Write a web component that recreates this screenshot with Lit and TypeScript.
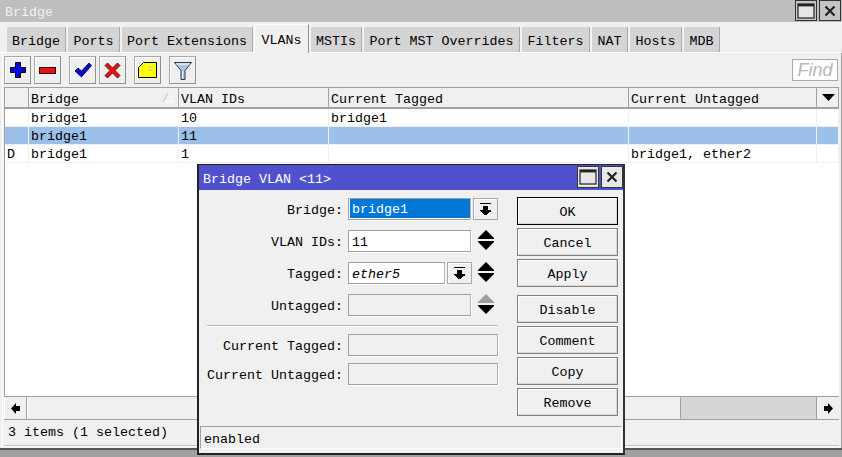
import { LitElement, html, css } from "lit";
import { customElement } from "lit/decorators.js";

const TABS: [string, number, boolean?][] = [
  ["Bridge", 60], ["Ports", 53], ["Port Extensions", 132], ["VLANs", 55, true], ["MSTIs", 52],
  ["Port MST Overrides", 157], ["Filters", 69], ["NAT", 37], ["Hosts", 53], ["MDB", 37],
];

const ddIcon = html`<svg width="13" height="13" viewBox="0 0 13 13" shape-rendering="crispEdges"><path d="M1 0h11v1H1zM4 3h5v4h3v1l-1 1h-1v1H9v1H8v1H5v-1H4v-1H3V9H2L1 8V7h3z" fill="#000"/></svg>`;
const spin = (dim = false, cls = "") => html`<svg class="spin ${cls}" width="16" height="20" viewBox="0 0 16 20">
  <polygon points="8,0 16,8 16,9 0,9 0,8" fill=${dim ? "#9aa09a" : "#000"}/>
  <polygon points="0,11 16,11 16,12 8,20 0,12" fill="#000"/></svg>`;

const winBtns = (light: boolean) => html`
  <span class="wb ${light ? "lt" : ""}"><svg width="18" height="16" viewBox="0 0 18 16"><rect x="1" y="1" width="16" height="14" fill="#e8e4e4" stroke="#222" stroke-width="1.2"/><rect x="1" y="1" width="16" height="2.4" fill="#222"/></svg></span>
  <span class="wb ${light ? "lt" : ""}"><svg width="12" height="12" viewBox="0 0 12 12"><path d="M1.5 1.5l9 9M10.500 1.500l-9 9" stroke="#222" stroke-width="2.2"/></svg></span>`;

@customElement("app-root")
export class AppRoot extends LitElement {
  static styles = css`
    :host { display: block; width: 842px; height: 457px; position: relative; overflow: hidden; background: #a0a0a0;
      font: 13.33px/16px "Liberation Mono", monospace; color: #000; }
    .win { height: 450px; background: #f0f0f0; display: flex; flex-direction: column; border-bottom: 2px solid #555; box-sizing: border-box; }
    .tbar { height: 22px; flex: none; background: #bebebe; color: #f2f2f2; display: flex; align-items: center; padding-left: 5px; }
    .tbar .t { flex: 1; padding-top: 4px; }
    .tbar .btns { display: flex; gap: 2px; margin: 0 1px 2px 0; align-self: flex-start; }
    .wb { width: 20px; height: 19px; border: 1px solid #333; background: #c4c4c4; display: flex; align-items: center; justify-content: center; }
    .wb.lt { background: #e8e8e8; }
    .tabs { height: 30px; flex: none; display: flex; align-items: flex-end; gap: 1px; padding-left: 6px; border-bottom: 1px solid #fff; }
    .tab { height: 25px; box-sizing: border-box; background: #d4d4d4; border-right: 1px solid #a8a8a8; border-left: 1px solid #f4f4f4; display: flex; align-items: center; justify-content: center; padding-top: 5px; }
    .tab.on { background: #f0f0f0; border-top: 1px solid #fff; border-left: 1px solid #fff; border-right: 1px solid #909090; padding-top: 3px; margin-bottom: -1px; height: 29px; }
    .panel { flex: 1; display: flex; flex-direction: column; margin-left: 2px; border-left: 1px solid #fff; padding: 0 2px 2px 1px; min-height: 0; border-right: 1px solid #a0a0a0; }
    .tools { height: 34px; flex: none; display: flex; align-items: flex-start; padding-top: 3px; box-sizing: border-box; }
    .tb { width: 27px; height: 28px; box-sizing: border-box; border: 1px solid #a8a8a8; border-bottom-color: #909090; border-right-color: #909090; background: #efefef; box-shadow: inset 1px 1px 0 #fff; display: flex; align-items: center; justify-content: center; margin-right: 3px; }
    .tb.sep { margin-right: 8px; }
    .find { margin-left: auto; margin-top: 3px; margin-right: 1px; width: 46px; height: 22px; box-sizing: border-box; border: 1px solid #a8a8a8; background: #fff; font: italic 18px/20px "Liberation Sans", sans-serif; color: #b4b8bc; text-align: center; }
    .table { flex: 1; min-height: 0; background: #fff; border: 1px solid #a0a0a0; border-right: none; display: flex; flex-direction: column; }
    .row { display: grid; grid-template-columns: 24px 150px 150px 300px 188px 22px; height: 18px; box-sizing: border-box; border-bottom: 1px solid #efefef; }
    .row > div { padding-left: 2px; white-space: pre; overflow: hidden; border-right: 1px solid #efefef; box-sizing: border-box; line-height: 19px; }
    .row.head { height: 21px; background: #f0f0f0; border-bottom: 2px solid #a0a0a0; }
    .row.head > div { border-right: 1px solid #a0a0a0; line-height: 24px; position: relative; }
    .row.sel { background: #9dc0e9; }
    .row.sel > div { border-right-color: #f0f0f0; }
    .sort { position: absolute; right: 4px; top: 4px; }
    .caret { display: flex; align-items: center; justify-content: center; }
    .sb { height: 23px; flex: none; display: flex; border-bottom: 1px solid #a0a0a0; box-sizing: border-box; background: #d6d6d6; }
    .sb .ab { width: 23px; background: #f0f0f0; border-left: 1px solid #fff; border-right: 1px solid #a0a0a0; display: flex; align-items: center; justify-content: center; box-sizing: border-box; }
    .sb .ab.r { border-left: 1px solid #a0a0a0; border-right: none; margin-left: auto; }
    .sb .th { width: 654px; background: #f0f0f0; border-left: 1px solid #fff; border-right: 1px solid #a0a0a0; box-sizing: border-box; }
    .status { height: 25px; flex: none; display: flex; align-items: center; padding-left: 4px; border-bottom: 1px solid #c0c0c0; box-shadow: 0 1px 0 #fff; }
    .dlg { position: absolute; left: 197px; top: 164px; width: 428px; height: 291px; box-sizing: border-box; background: #f0f0f0; border: 2px solid #222; border-top-width: 1px; border-right-color: #333; display: flex; flex-direction: column; }
    .dt { height: 25px; flex: none; background: #4f52cc; color: #fff; display: flex; align-items: center; padding-left: 4px; }
    .dt .t { flex: 1; padding-top: 5px; }
    .dt .btns { display: flex; gap: 2px; align-self: flex-end; margin-bottom: 2px; }
    .dt .wb { height: 20px; }
    .dbody { display: flex; padding-top: 7px; }
    .form { width: 299px; padding-top: 1px; display: flex; flex-direction: column; gap: 10px; }
    .fr { display: flex; height: 22px; align-items: center; }
    .lab { width: 144px; text-align: right; flex: none; margin-right: 5px; padding-top: 4px; box-sizing: border-box; }
    .inp { width: 123px; height: 22px; box-sizing: border-box; border: 1px solid #a0a0a0; border-right-color: #b4b4b4; background: #fff; padding: 4px 0 0 3px; line-height: 16px; box-shadow: 1px 1px 0 #fff; }
    .inp.short { width: 97px; font-style: italic; }
    .inp.full { width: 150px; }
    .inp.ro { background: #f0f0f0; }
    .inp.pick { padding: 0 0 0 1px; }
    .hl { background: #0078d7; color: #fff; height: 19px; display: block; padding: 3px 0 0 2px; box-sizing: border-box; }
    .dd { width: 25px; height: 22px; box-sizing: border-box; border: 1px solid #a8a8a8; background: #efefef; display: flex; align-items: center; justify-content: center; margin-left: 2px; box-shadow: inset 1px 1px 0 #fff; }
    .spin { margin: -3px 0 0 7px; }
    .spin.near { margin-left: 6px; }
    .hr { height: 1px; background: #b8b8b8; box-shadow: 0 1px 0 #fff; margin: -1px 0 -2px 8px; width: 291px; }
    .rows2 { display: flex; flex-direction: column; gap: 7px; }
    .btns2 { margin-left: 19px; width: 101px; display: flex; flex-direction: column; gap: 3px; }
    .b { height: 28px; box-sizing: border-box; border: 1px solid #808080; padding-top: 4px; box-shadow: inset -1px -1px 0 #d8d8d8, inset 1px 1px 0 #fff; display: flex; align-items: center; justify-content: center; background: #f0f0f0; }
    .b.def { border-color: #000; }
    .b.gap { margin-top: 5px; }
    .dst { margin: auto 1px 4px 1px; height: 23px; box-sizing: border-box; border: 1px solid #a0a0a0; border-right-color: #fff; border-bottom-color: #fff; padding: 4px 0 0 3px; display: flex; align-items: center; }
    svg { display: block; }
  `;

  render() {
    const rows = [
      ["", "bridge1", "10", "bridge1", "", ""],
      ["", "bridge1", "11", "", "", ""],
      ["D", "bridge1", "1", "", "bridge1, ether2", ""],
    ];
    return html`
      <div class="win">
        <div class="tbar"><span class="t">Bridge</span><span class="btns">${winBtns(false)}</span></div>
        <div class="tabs">
          ${TABS.map(([n, w, on]) => html`<div class="tab ${on ? "on" : ""}" style="width:${w}px">${n}</div>`)}
        </div>
        <div class="panel">
          <div class="tools">
            <div class="tb"><svg width="16" height="16" viewBox="0 0 16 16"><path d="M5.500.5h5v5h5v5h-5v5h-5v-5h-5v-5h5z" fill="#0a0ae0" stroke="#000"/></svg></div>
            <div class="tb sep"><svg width="17" height="7" viewBox="0 0 17 7"><rect x=".5" y=".5" width="16" height="6" fill="#e81010" stroke="#300"/></svg></div>
            <div class="tb"><svg width="18" height="16" viewBox="0 0 18 16"><path d="M1 9l3-3 3.500 3L15 1l2.500 2.500L7.500 15z" fill="#0a0ae0" stroke="#000" stroke-width=".8"/></svg></div>
            <div class="tb sep"><svg width="17" height="17" viewBox="0 0 17 17"><path d="M1 3.500L3.500 1l5 5 5-5L16 3.500l-5 5 5 5-2.500 2.500-5-5-5 5L1 13.500l5-5z" fill="#f01010" stroke="#300" stroke-width=".8"/></svg></div>
            <div class="tb sep"><svg width="19" height="16" viewBox="0 0 19 16"><path d="M.5 5.500L5.500.5h13v15H.5z" fill="#ffff00" stroke="#000"/><path d="M10 5h6M10 8h6" stroke="#c8c8a0"/></svg></div>
            <div class="tb"><svg width="18" height="19" viewBox="0 0 18 19"><path d="M.5 1.500h17L11 9.500v9H7v-9z" fill="#a9c8e8" stroke="#303840"/><path d="M2.500 3h13" stroke="#e8f0f8" stroke-width="1.500"/><path d="M8.500 10v8" stroke="#e8f0f8"/></svg></div>
            <div class="find">Find</div>
          </div>
          <div class="table">
            <div class="row head">
              <div></div>
              <div>Bridge<svg class="sort" width="12" height="11" viewBox="0 0 12 11"><path d="M6 1L1 10h10z" fill="none" stroke="#fff"/><path d="M6 1L1 10" stroke="#bdbdbd" fill="none"/></svg></div>
              <div>VLAN IDs</div><div>Current Tagged</div><div>Current Untagged</div>
              <div class="caret"><svg width="13" height="7" viewBox="0 0 13 7"><path d="M0 0h13L6.500 7z" fill="#000"/></svg></div>
            </div>
            ${rows.map((r, i) => html`<div class="row ${i === 1 ? "sel" : ""}">${r.map((c) => html`<div>${c}</div>`)}</div>`)}
          </div>
          <div class="sb">
            <div class="ab"><svg width="9" height="11" viewBox="0 0 9 11"><path d="M5 0v3h4v5H5v3L0 5.500z" fill="#000"/></svg></div>
            <div class="th"></div>
            <div class="ab r"><svg width="9" height="11" viewBox="0 0 9 11"><path d="M4 0v3H0v5h4v3l5-5.500z" fill="#000"/></svg></div>
          </div>
          <div class="status">3 items (1 selected)</div>
        </div>
      </div>

      <div class="dlg">
        <div class="dt"><span class="t">Bridge VLAN &lt;11&gt;</span><span class="btns">${winBtns(true)}</span></div>
        <div class="dbody">
          <div class="form">
            <div class="fr"><span class="lab">Bridge:</span><div class="inp pick"><span class="hl">bridge1</span></div><div class="dd">${ddIcon}</div></div>
            <div class="fr"><span class="lab">VLAN IDs:</span><div class="inp">11</div>${spin()}</div>
            <div class="fr"><span class="lab">Tagged:</span><div class="inp short">ether5</div><div class="dd">${ddIcon}</div>${spin(false, "near")}</div>
            <div class="fr"><span class="lab">Untagged:</span><div class="inp ro"></div>${spin(true)}</div>
            <div class="hr"></div>
            <div class="rows2">
              <div class="fr"><span class="lab">Current Tagged:</span><div class="inp ro full"></div></div>
              <div class="fr"><span class="lab">Current Untagged:</span><div class="inp ro full"></div></div>
            </div>
          </div>
          <div class="btns2">
            <div class="b def">OK</div><div class="b">Cancel</div><div class="b">Apply</div>
            <div class="b gap">Disable</div><div class="b">Comment</div><div class="b">Copy</div><div class="b">Remove</div>
          </div>
        </div>
        <div class="dst">enabled</div>
      </div>
    `;
  }
}
